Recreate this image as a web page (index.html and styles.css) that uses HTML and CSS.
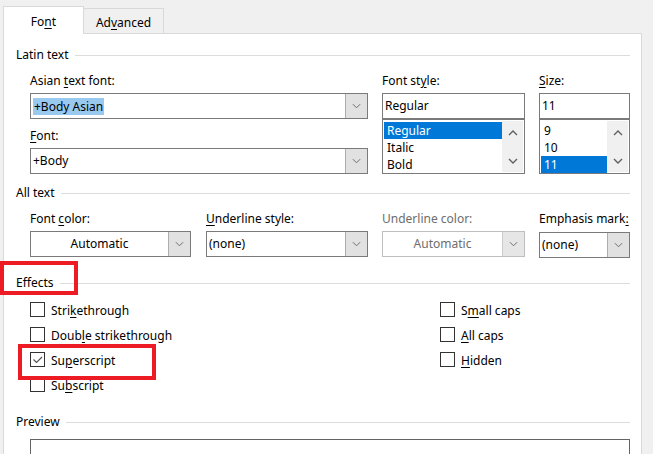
FILE: index.html
```html
<!DOCTYPE html>
<html>
<head>
<meta charset="utf-8">
<link rel="stylesheet" href="styles.css">
</head>
<body>
<div class="tabs">
  <div class="tab active">Fo<u>n</u>t</div>
  <div class="tab">Ad<u>v</u>anced</div>
</div>
<div class="panel">
  <div class="section-head first"><span>Latin text</span><i class="rule"></i></div>
  <div class="font-grid">
    <div class="col">
      <label class="lbl">Asian <u>t</u>ext font:</label>
      <div class="combo"><span class="val"><span class="sel-unfocused">+Body Asian</span></span><span class="btn"><svg viewBox="0 0 10 6" class="chev"><path d="M1 1 L5 5 L9 1"/></svg></span></div>
      <label class="lbl lbl2"><u>F</u>ont:</label>
      <div class="combo"><span class="val">+Body</span><span class="btn"><svg viewBox="0 0 10 6" class="chev"><path d="M1 1 L5 5 L9 1"/></svg></span></div>
    </div>
    <div class="col">
      <label class="lbl">Font st<u>y</u>le:</label>
      <div class="textbox">Regular</div>
      <div class="listbox">
        <div class="items">
          <div class="item selected">Regular</div>
          <div class="item">Italic</div>
          <div class="item">Bold</div>
        </div>
        <div class="scroll">
          <svg viewBox="0 0 10 6" class="arrow"><path d="M1 5 L5 1 L9 5"/></svg>
          <svg viewBox="0 0 10 6" class="arrow"><path d="M1 1 L5 5 L9 1"/></svg>
        </div>
      </div>
    </div>
    <div class="col">
      <label class="lbl"><u>S</u>ize:</label>
      <div class="textbox">11</div>
      <div class="listbox">
        <div class="items">
          <div class="item">9</div>
          <div class="item">10</div>
          <div class="item selected">11</div>
        </div>
        <div class="scroll">
          <svg viewBox="0 0 10 6" class="arrow"><path d="M1 5 L5 1 L9 5"/></svg>
          <svg viewBox="0 0 10 6" class="arrow"><path d="M1 1 L5 5 L9 1"/></svg>
        </div>
      </div>
    </div>
  </div>

  <div class="section-head all"><span>All text</span><i class="rule"></i></div>
  <div class="all-grid">
    <div class="col">
      <label class="lbl">Font <u>c</u>olor:</label>
      <div class="combo"><span class="val center">Automatic</span><span class="btn"><svg viewBox="0 0 10 6" class="chev"><path d="M1 1 L5 5 L9 1"/></svg></span></div>
    </div>
    <div class="col shift">
      <label class="lbl"><u>U</u>nderline style:</label>
      <div class="combo"><span class="val">(none)</span><span class="btn"><svg viewBox="0 0 10 6" class="chev"><path d="M1 1 L5 5 L9 1"/></svg></span></div>
    </div>
    <div class="col">
      <label class="lbl disabled">Underline color:</label>
      <div class="combo dis"><span class="val center disabled">Automatic</span><span class="btn"><svg viewBox="0 0 10 6" class="chev"><path d="M1 1 L5 5 L9 1"/></svg></span></div>
    </div>
    <div class="col">
      <label class="lbl">Emphasis mark<u>:</u></label>
      <div class="combo emph"><span class="val">(none)</span><span class="btn"><svg viewBox="0 0 10 6" class="chev"><path d="M1 1 L5 5 L9 1"/></svg></span></div>
    </div>
  </div>

  <div class="section-head effects"><span>Effects</span><i class="rule"></i></div>
  <div class="effects-grid">
    <div class="checks">
      <div class="check"><span class="box"></span><span>Stri<u>k</u>ethrough</span></div>
      <div class="check"><span class="box"></span><span>Doub<u>l</u>e strikethrough</span></div>
      <div class="check"><span class="box"><svg viewBox="0 0 13 13" class="tick"><path d="M2.5 6.5 L5.5 9.5 L11 4"/></svg></span><span>Su<u>p</u>erscript</span></div>
      <div class="check"><span class="box"></span><span>Su<u>b</u>script</span></div>
    </div>
    <div class="checks right">
      <div class="check"><span class="box"></span><span>S<u>m</u>all caps</span></div>
      <div class="check"><span class="box"></span><span><u>A</u>ll caps</span></div>
      <div class="check"><span class="box"></span><span><u>H</u>idden</span></div>
    </div>
  </div>

  <div class="section-head preview-head"><span>Preview</span><i class="rule"></i></div>
  <div class="preview"></div>
</div>

<div class="mark mark-effects"></div>
<div class="mark mark-super"></div>
</body>
</html>
```

FILE: styles.css
```css
html, body {
  margin: 0;
  padding: 0;
}
body {
  background: #f0f0f0;
  font-family: "Noto Sans", "Open Sans", sans-serif;
  font-size: 12px;
  line-height: 16px;
  color: #000;
  width: 653px;
  height: 454px;
  overflow: hidden;
  position: relative;
}
u {
  text-decoration: underline;
  text-underline-offset: 2px;
}

/* tabs */
.tabs {
  display: flex;
  align-items: flex-end;
  height: 33px;
  padding-left: 3px;
  box-sizing: border-box;
}
.tab {
  box-sizing: border-box;
  border: 1px solid #d9d9d9;
  border-bottom: none;
  display: flex;
  align-items: center;
  justify-content: center;
  padding-top: 3px;
}
.tab.active {
  width: 81px;
  height: 28px;
  margin-bottom: -1px;
  background: #fff;
  position: relative;
  z-index: 1;
}
.tab:not(.active) {
  width: 80px;
  height: 25px;
  border-left: none;
  background: #f0f0f0;
}

/* panel */
.panel {
  margin-left: 3px;
  width: 639px;
  height: 421px;
  overflow: hidden;
  box-sizing: border-box;
  border: 1px solid #d9d9d9;
  border-bottom: none;
  background: #fff;
  padding: 0 11px 0 12px;
}
.section-head {
  display: flex;
  align-items: center;
  height: 16px;
}
.section-head .rule {
  flex: 1;
  height: 1px;
  background: #dcdcdc;
  margin-left: 6px;
}
.section-head.first { margin-top: 13px; }
.section-head.all { margin-top: 11px; }
.section-head.effects { margin-top: 17px; }
.section-head.preview-head { margin-top: 16px; }

.lbl {
  display: block;
  height: 16px;
  margin-bottom: 4px;
  white-space: nowrap;
}
.lbl2 { margin-top: 9px; }
.disabled { color: #6d6d6d; }

.font-grid {
  display: grid;
  grid-template-columns: 338px 143px 91px;
  column-gap: 14px;
  margin: 10px 0 0 14px;
}
.all-grid {
  display: grid;
  grid-template-columns: 161px 163px 143px 91px;
  column-gap: 14px;
  margin: 10px 0 0 14px;
}
.all-grid .shift { padding-left: 1px; }

.col { display: flex; flex-direction: column; }

.combo {
  display: flex;
  height: 26px;
  box-sizing: border-box;
  border: 1px solid #7a7a7a;
  background: #fff;
}
.combo.dis { border-color: #bfbfbf; }
.combo.emph { margin-top: 1px; }
.combo .val {
  flex: 1;
  padding-left: 2px;
  display: flex;
  align-items: center;
  white-space: nowrap;
}
.combo .val.center { justify-content: center; padding-right: 2px; }
.sel-unfocused {
  background: #99c9ef;
  padding: 0 1px;
  line-height: 17px;
}
.combo .btn {
  width: 21px;
  background: #e1e1e1;
  border-left: 1px solid #adadad;
  display: flex;
  align-items: center;
  justify-content: center;
}
.combo.dis .btn { background: #e6e6e6; border-left-color: #cccccc; }
.chev {
  width: 9px;
  height: 6px;
  fill: none;
  stroke: #606060;
  stroke-width: 1;
}

.textbox {
  height: 26px;
  box-sizing: border-box;
  border: 1px solid #7a7a7a;
  padding-left: 2px;
  display: flex;
  align-items: center;
}
.listbox {
  height: 55px;
  box-sizing: border-box;
  border: 1px solid #7a7a7a;
  display: flex;
  padding: 1px;
}
.listbox .items { flex: 1; padding-top: 1px; }
.item {
  height: 17px;
  line-height: 17px;
  padding-left: 3px;
}
.item.selected {
  background: #0078d7;
  color: #fff;
}
.scroll {
  width: 21px;
  background: #f0f0f0;
  display: flex;
  flex-direction: column;
  justify-content: space-between;
  align-items: center;
  padding: 9px 0 8px;
}
.arrow {
  width: 10px;
  height: 6px;
  fill: none;
  stroke: #606060;
  stroke-width: 1.4;
}

/* effects */
.effects-grid {
  display: flex;
  margin: 7px 0 0 14px;
}
.checks { width: 410px; }
.checks.right { width: auto; }
.check {
  display: flex;
  align-items: center;
  height: 25px;
  white-space: nowrap;
}
.box {
  width: 15px;
  height: 15px;
  box-sizing: border-box;
  border: 1px solid #333;
  margin-right: 6px;
  margin-top: -3px;
  display: flex;
}
.tick {
  width: 13px;
  height: 13px;
  fill: none;
  stroke: #555;
  stroke-width: 1.2;
}

.preview {
  margin: 9px 0 0 14px;
  height: 30px;
  border: 1px solid #646464;
}

/* red annotation boxes */
.mark {
  position: absolute;
  border: 4px solid #ed1c24;
  box-sizing: border-box;
}
.mark-effects {
  left: 0;
  top: 261px;
  width: 78px;
  height: 34px;
}
.mark-super {
  left: 18px;
  top: 344px;
  width: 138px;
  height: 36px;
}
```
